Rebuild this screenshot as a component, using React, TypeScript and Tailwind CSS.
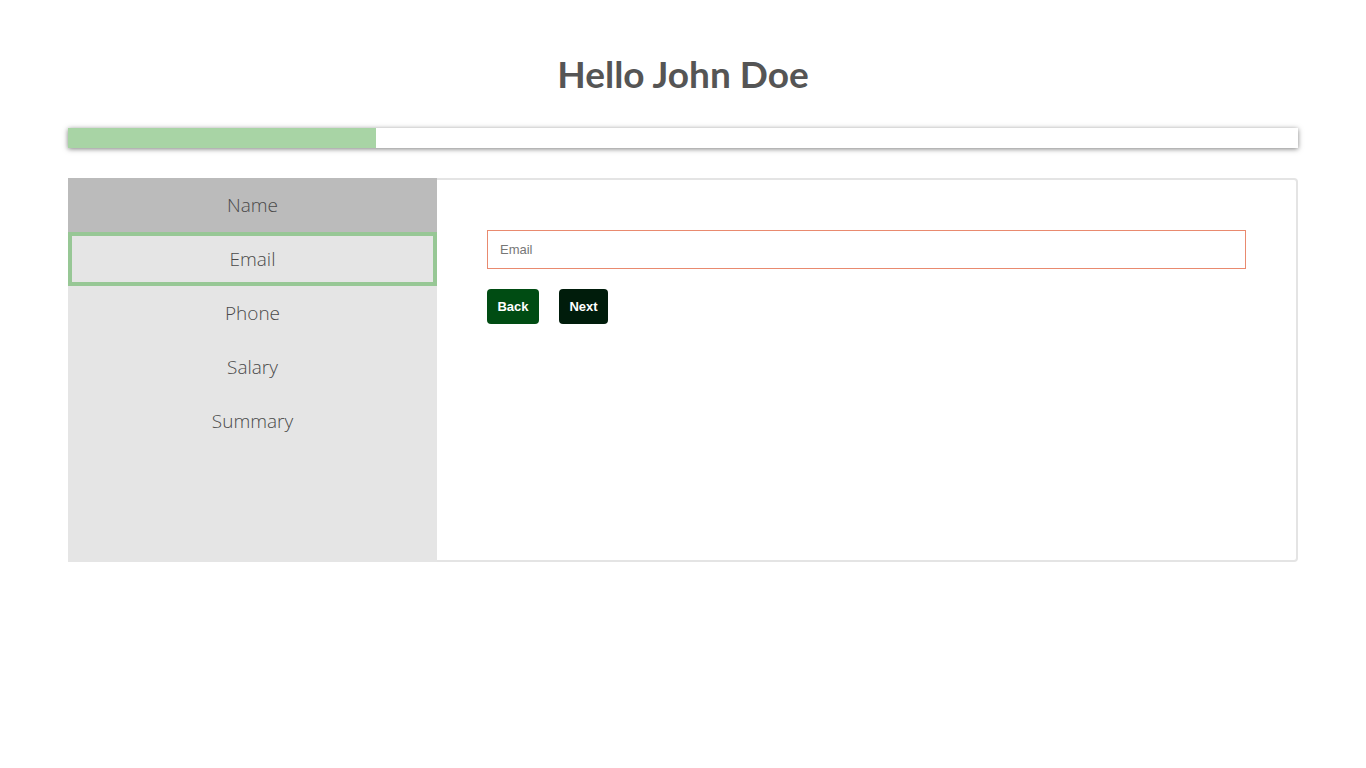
import React from "react";

const steps = ["Name", "Email", "Phone", "Salary", "Summary"];

export default function App() {
  const active = 1;
  return (
    <div className="min-h-screen bg-white px-[68px]" style={{ fontFamily: "Lato, 'Open Sans', sans-serif" }}>
      <h1 className="pt-[49px] text-center text-[37px] font-bold leading-[50px] text-[#555555]">Hello John Doe</h1>
      <div className="mt-[29px] h-[20px] w-full bg-white shadow-[0_1px_5px_rgba(0,0,0,0.5)]">
        <div className="h-full bg-[#a8d4a5]" style={{ width: "25%" }} />
      </div>
      <div className="mt-[30px] flex h-[384px]">
        <div className="flex w-[369px] flex-col bg-[#e5e5e5]">
          {steps.map((s, i) => (
            <div
              key={s}
              className={
                "flex h-[54px] items-center justify-center text-[19px] text-[#4a4a4a] " +
                (i === 0 ? "bg-[#bbbbbb]" : "") +
                (i === active ? " border-4 border-[#97c795] bg-[#e5e5e5]" : "")
              }
              style={{ fontFamily: "'Open Sans', Lato, sans-serif", fontWeight: 300 }}
            >
              {s}
            </div>
          ))}
        </div>
        <div className="flex-1 rounded-r-[4px] border-2 border-l-0 border-[#e4e4e4] px-[50px] pt-[50px]">
          <input
            placeholder="Email"
            className="h-[39px] w-full border border-[#e98a6f] px-[12px] text-[13px] text-[#333] outline-none placeholder:text-[#777]"
            style={{ fontFamily: "'Liberation Sans', Arial, sans-serif" }}
          />
          <div className="mt-[20px] flex gap-[20px]" style={{ fontFamily: "'Liberation Sans', Arial, sans-serif" }}>
            <button className="h-[35px] w-[52px] rounded-[4px] bg-[#004c13] text-[13px] font-bold text-white">Back</button>
            <button className="h-[35px] w-[49px] rounded-[4px] bg-[#001c0b] text-[13px] font-bold text-white">Next</button>
          </div>
        </div>
      </div>
    </div>
  );
}
